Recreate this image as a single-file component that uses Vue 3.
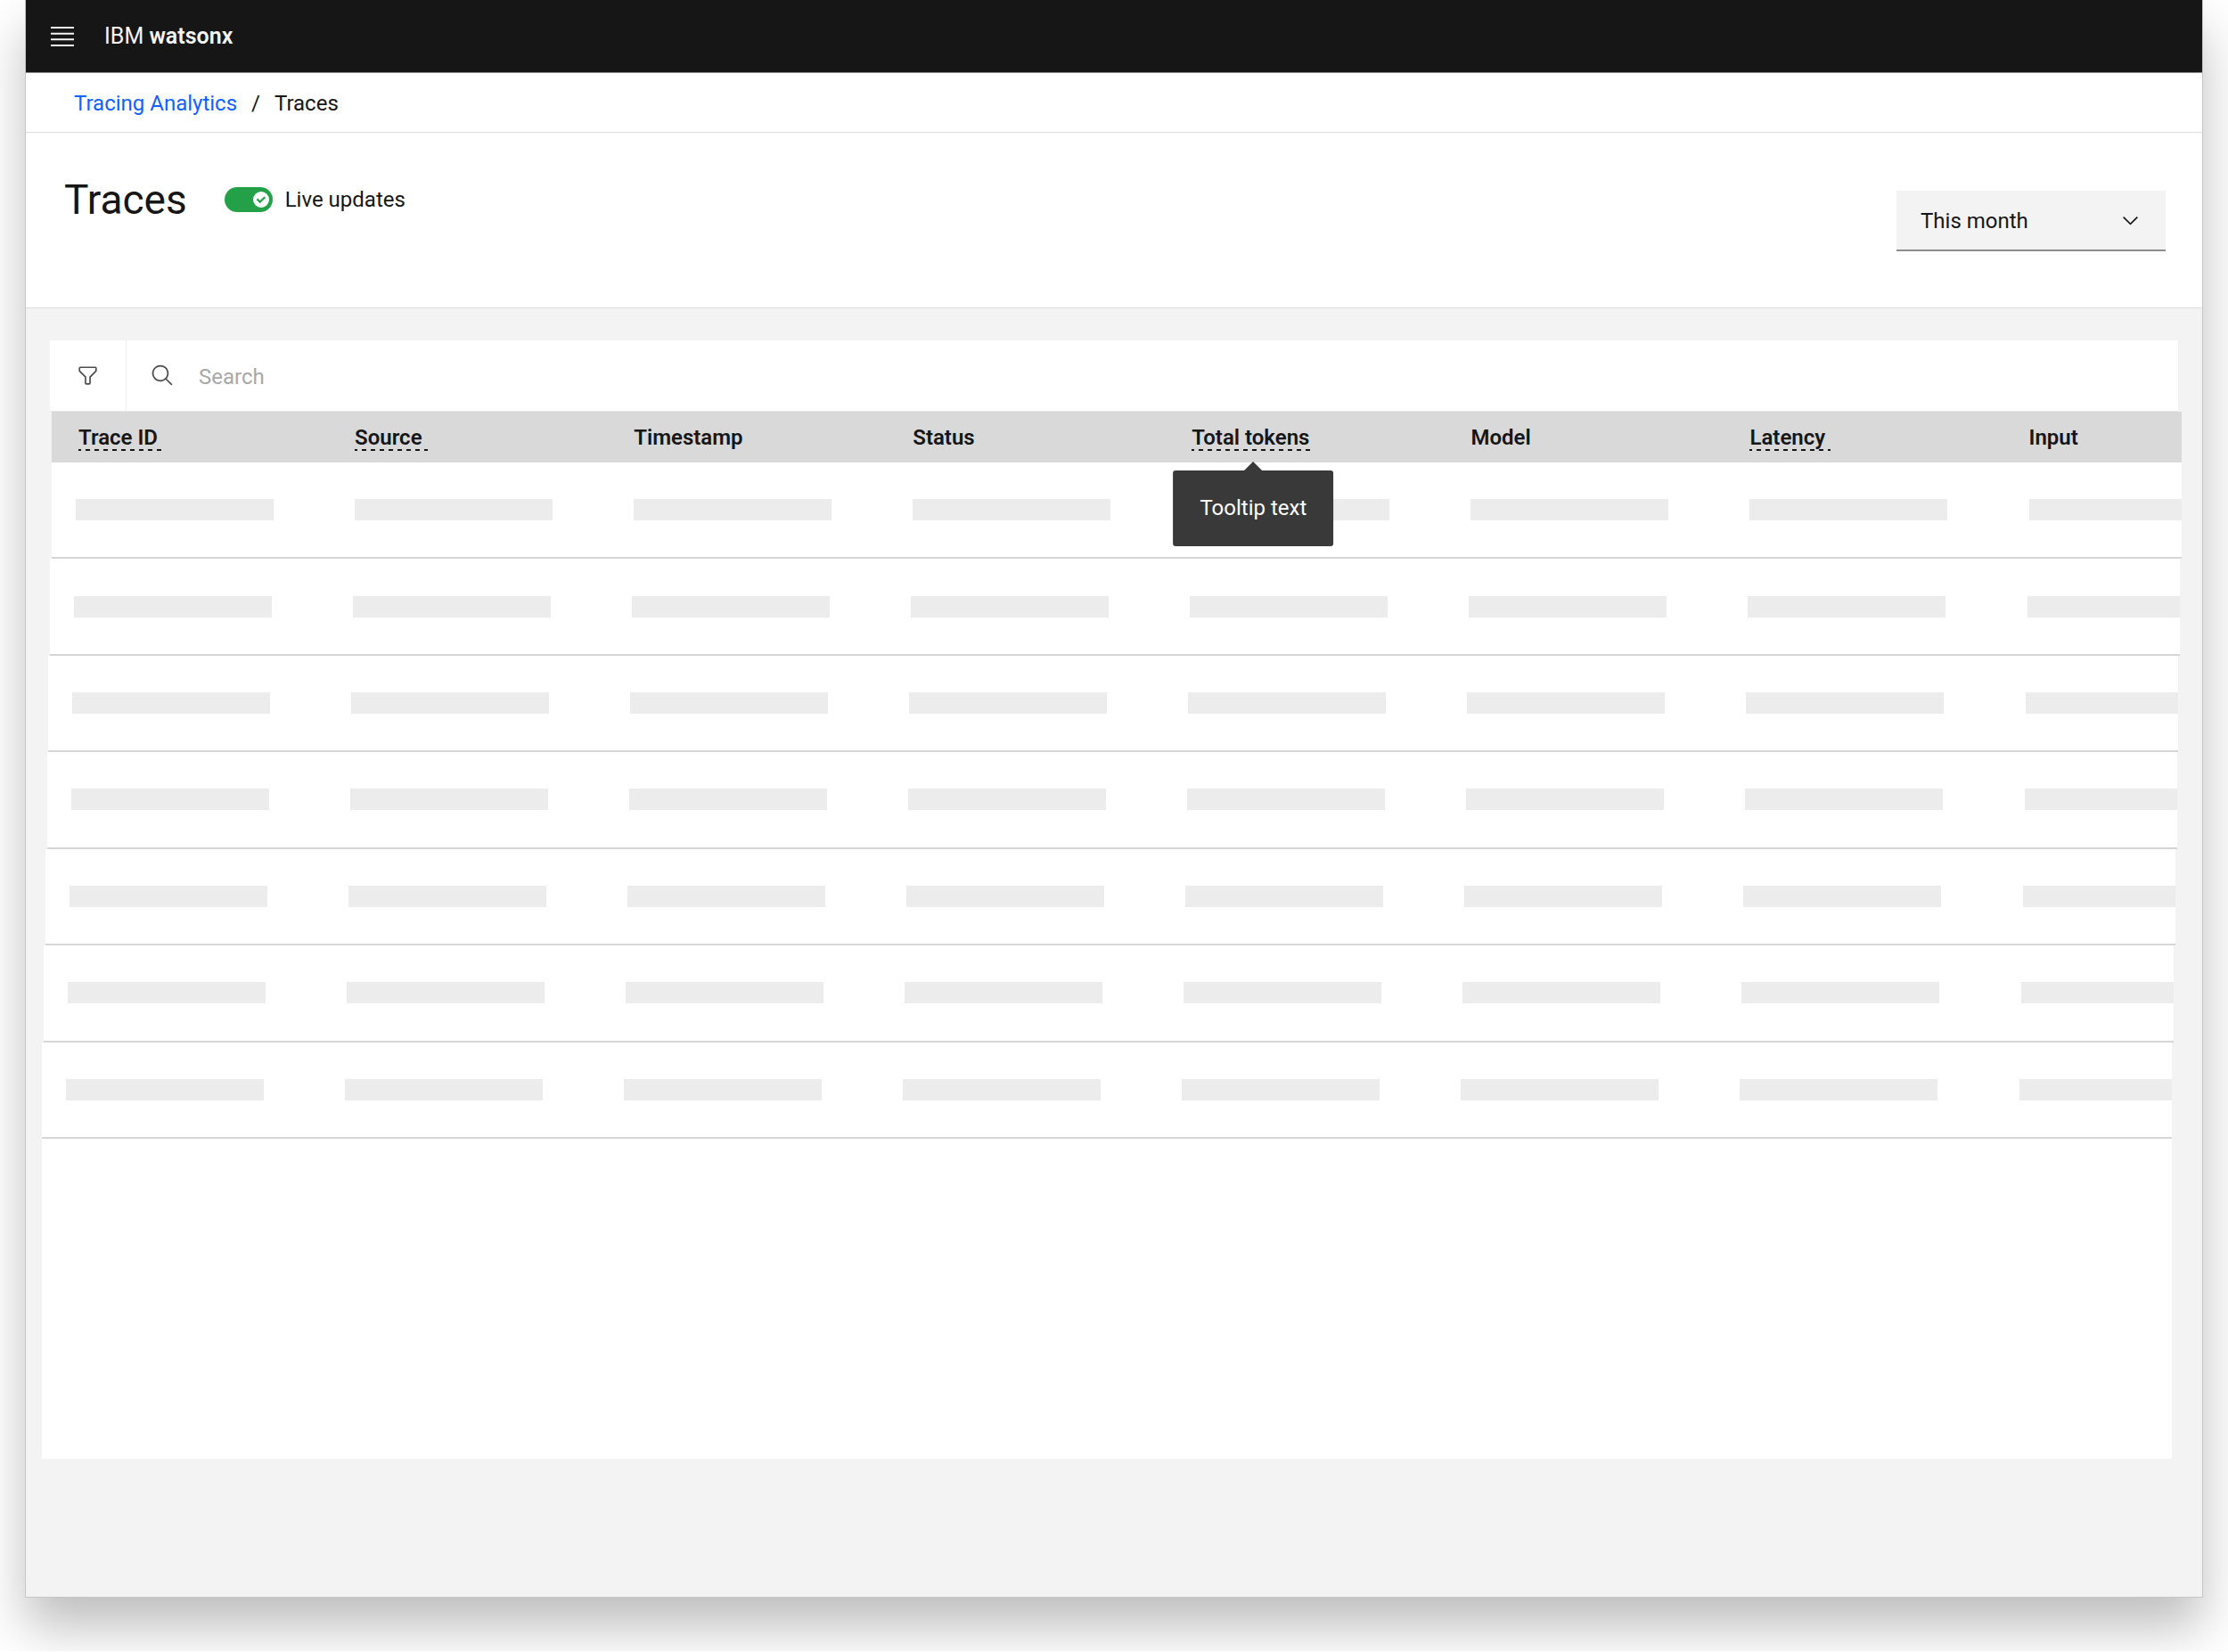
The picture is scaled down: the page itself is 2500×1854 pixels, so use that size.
<script setup>
import { ref } from 'vue'

const live = ref(true)
const period = ref('This month')
const query = ref('')

const columns = [
  { name: 'Trace ID', hint: true },
  { name: 'Source', hint: true },
  { name: 'Timestamp' },
  { name: 'Status' },
  { name: 'Total tokens', hint: true, tooltip: 'Tooltip text' },
  { name: 'Model' },
  { name: 'Latency', hint: true },
  { name: 'Input' },
]

// Horizontal drift of every skeleton row, in pixels
const rows = [11, 9, 7, 6, 4, 2, 0]
</script>

<template>
  <div class="page">
    <div class="window">
      <header class="topbar">
        <button class="menu" type="button" aria-label="Open menu">
          <svg width="26" height="22" viewBox="0 0 26 22" fill="currentColor" aria-hidden="true">
            <path d="M0 0h26v2H0zM0 6.7h26v2H0zM0 13.3h26v2H0zM0 20h26v2H0z" />
          </svg>
        </button>
        <div class="brand">IBM <b>watsonx</b></div>
      </header>

      <nav class="crumbs" aria-label="Breadcrumb">
        <a href="#">Tracing Analytics</a>
        <span>/</span>
        <span>Traces</span>
      </nav>

      <section class="page-head">
        <div class="title-row">
          <h1>Traces</h1>
          <label class="toggle">
            <span class="switch">
              <input v-model="live" type="checkbox" role="switch" />
              <svg class="knob" width="18" height="18" viewBox="0 0 18 18" aria-hidden="true">
                <circle cx="9" cy="9" r="9" fill="#fff" />
                <path d="M4.5 8.4l3.2 3.2 5.6-5.4" fill="none" stroke="#24a148" stroke-width="2.2" />
              </svg>
            </span>
            Live updates
          </label>
        </div>
        <div class="period">
          <select v-model="period" aria-label="Period">
            <option>This month</option>
          </select>
          <svg class="chevron" width="27" height="27" viewBox="0 0 32 32" aria-hidden="true">
            <path d="M16 22L6 12l1.4-1.4 8.6 8.6 8.6-8.6L26 12z" fill="#161616" />
          </svg>
        </div>
      </section>

      <main class="content">
        <div class="toolbar">
          <button class="filter" type="button" aria-label="Filter">
            <svg width="27" height="27" viewBox="0 0 32 32" fill="currentColor" aria-hidden="true">
              <path
                d="M18,28H14a2,2,0,0,1-2-2V18.41L4.59,11A2,2,0,0,1,4,9.59V6A2,2,0,0,1,6,4H26a2,2,0,0,1,2,2V9.59A2,2,0,0,1,27.41,11L20,18.41V26A2,2,0,0,1,18,28ZM6,6V9.59l8,8V26h4V17.59l8-8V6Z"
              />
            </svg>
          </button>
          <label class="search">
            <svg width="27" height="27" viewBox="0 0 32 32" fill="currentColor" aria-hidden="true">
              <path
                d="M29,27.586l-7.552-7.552a11.018,11.018,0,1,0-1.414,1.414L27.586,29ZM4,13a9,9,0,1,1,9,9A9.01,9.01,0,0,1,4,13Z"
              />
            </svg>
            <input v-model="query" type="search" placeholder="Search" aria-label="Search" />
          </label>
        </div>

        <table class="traces">
          <thead>
            <tr class="head-row">
              <th v-for="col in columns" :key="col.name" scope="col">
                <span class="term" :class="{ hint: col.hint }">
                  {{ col.name }}
                  <span v-if="col.tooltip" class="tooltip" role="tooltip">{{ col.tooltip }}</span>
                </span>
              </th>
            </tr>
          </thead>
          <tbody>
            <tr
              v-for="(drift, i) in rows"
              :key="i"
              :style="{ marginLeft: drift + 'px', marginRight: -drift + 'px' }"
            >
              <td v-for="col in columns" :key="col.name"><div class="bar"></div></td>
            </tr>
          </tbody>
        </table>
        <div class="empty"></div>
      </main>
    </div>
  </div>
</template>

<style>
body {
  margin: 0;
  background: #fff;
}
</style>

<style scoped>
* {
  box-sizing: border-box;
}
.page {
  padding: 0 29px 61px;
  overflow: hidden;
  color: #161616;
  font-family: Roboto, "Liberation Sans", sans-serif;
  font-size: 24px;
  line-height: 32px;
}
.window {
  background: #f3f3f3;
  box-shadow: 0 0 0 1px #c6c6c6, 0 34px 54px rgba(0, 0, 0, 0.26);
}
button {
  padding: 0;
  border: 0;
  background: none;
  cursor: pointer;
}
svg {
  display: block;
}

.topbar {
  display: flex;
  align-items: center;
  gap: 34px;
  height: 82px;
  padding: 0 28px;
  border-bottom: 1px solid #8d8d8d;
  background: #161616;
  color: #f4f4f4;
}
.menu {
  color: #f4f4f4;
}
.brand {
  font-size: 25px;
}
.brand b {
  font-weight: 600;
}

.crumbs {
  display: flex;
  align-items: center;
  gap: 16px;
  height: 67px;
  padding: 2px 54px 0;
  border-bottom: 1px solid #dcdcdc;
  background: #fff;
}
.crumbs a {
  color: #0f62fe;
  text-decoration: none;
}

.page-head {
  display: flex;
  justify-content: space-between;
  align-items: flex-start;
  height: 197px;
  padding: 43px 41px 0 43px;
  border-bottom: 1px solid #dcdcdc;
  background: #fff;
}
.title-row {
  display: flex;
  align-items: center;
  gap: 42px;
}
h1 {
  margin: 0;
  font-size: 46px;
  font-weight: 400;
  line-height: 64px;
}
.toggle {
  display: flex;
  align-items: center;
  gap: 14px;
}
.switch {
  position: relative;
  display: block;
}
.switch input {
  appearance: none;
  display: block;
  width: 54px;
  height: 28px;
  margin: 0;
  border-radius: 14px;
  background: #8d8d8d;
}
.switch input:checked {
  background: #24a148;
}
.knob {
  position: absolute;
  top: 5px;
  left: 5px;
  pointer-events: none;
}
.switch input:checked + .knob {
  left: 32px;
}
.period {
  position: relative;
  margin-top: 22px;
}
.period select {
  appearance: none;
  display: block;
  width: 302px;
  height: 68px;
  padding: 2px 68px 0 27px;
  border: 0;
  border-bottom: 2px solid #8d8d8d;
  border-radius: 0;
  background: #f3f3f3;
  color: inherit;
  font: inherit;
}
.chevron {
  position: absolute;
  top: 20px;
  right: 26px;
  pointer-events: none;
}

.content {
  padding: 36px 34px 155px 18px;
}
.toolbar {
  display: flex;
  height: 80px;
  margin: 0 -7px 0 9px;
  border-bottom: 1px solid #e8e8e8;
  background: #fff;
  color: #4c4c4c;
}
.filter {
  display: flex;
  align-items: center;
  justify-content: center;
  width: 86px;
  border-right: 1px solid #f0f0f0;
  color: inherit;
}
.search {
  display: flex;
  flex: 1;
  align-items: center;
  gap: 27px;
  padding: 0 27px;
}
.search input {
  flex: 1;
  min-width: 0;
  padding: 2px 0 0;
  border: 0;
  outline: 0;
  background: none;
  color: #161616;
  font: inherit;
}
.search input::placeholder {
  color: #a8a8a8;
  opacity: 1;
}

.traces,
.traces thead {
  display: block;
}
.traces tr {
  display: grid;
  grid-template-columns: repeat(8, 13.1%);
  align-items: center;
}
.traces .head-row {
  height: 57px;
  margin: 0 -11px 0 11px;
  background: #d9d9d9;
}
th {
  padding: 0 0 0 27px;
  font-weight: 600;
  line-height: 32px;
  text-align: left;
}
th:first-child {
  padding-left: 30px;
}
.term {
  position: relative;
  display: inline-block;
}
.hint {
  padding-right: 6px;
  background: repeating-linear-gradient(90deg, #161616 0 3px, transparent 3px 8px, #161616 8px 10px) left bottom 1px / 100% 2px no-repeat;
}
.tooltip {
  position: absolute;
  z-index: 1;
  top: 53px;
  left: 50%;
  padding: 26px 30px 27px;
  border-radius: 3px;
  background: #393939;
  color: #fff;
  font-weight: 400;
  white-space: nowrap;
  transform: translateX(-50%);
}
.tooltip::before {
  content: "";
  position: absolute;
  bottom: 100%;
  left: 50%;
  margin-left: -10px;
  border: 10px solid transparent;
  border-top-width: 0;
  border-bottom-color: #393939;
}
.traces tbody {
  display: grid;
  grid-auto-rows: 1fr;
  height: 759px;
}
.traces tbody tr {
  overflow: hidden;
  border-bottom: 2px solid #d6d6d6;
  background: #fff;
}
td {
  padding: 0 0 0 27px;
}
.bar {
  width: 222px;
  height: 24px;
  background: #ececec;
}
.empty {
  height: 359px;
  background: #fff;
}
</style>
